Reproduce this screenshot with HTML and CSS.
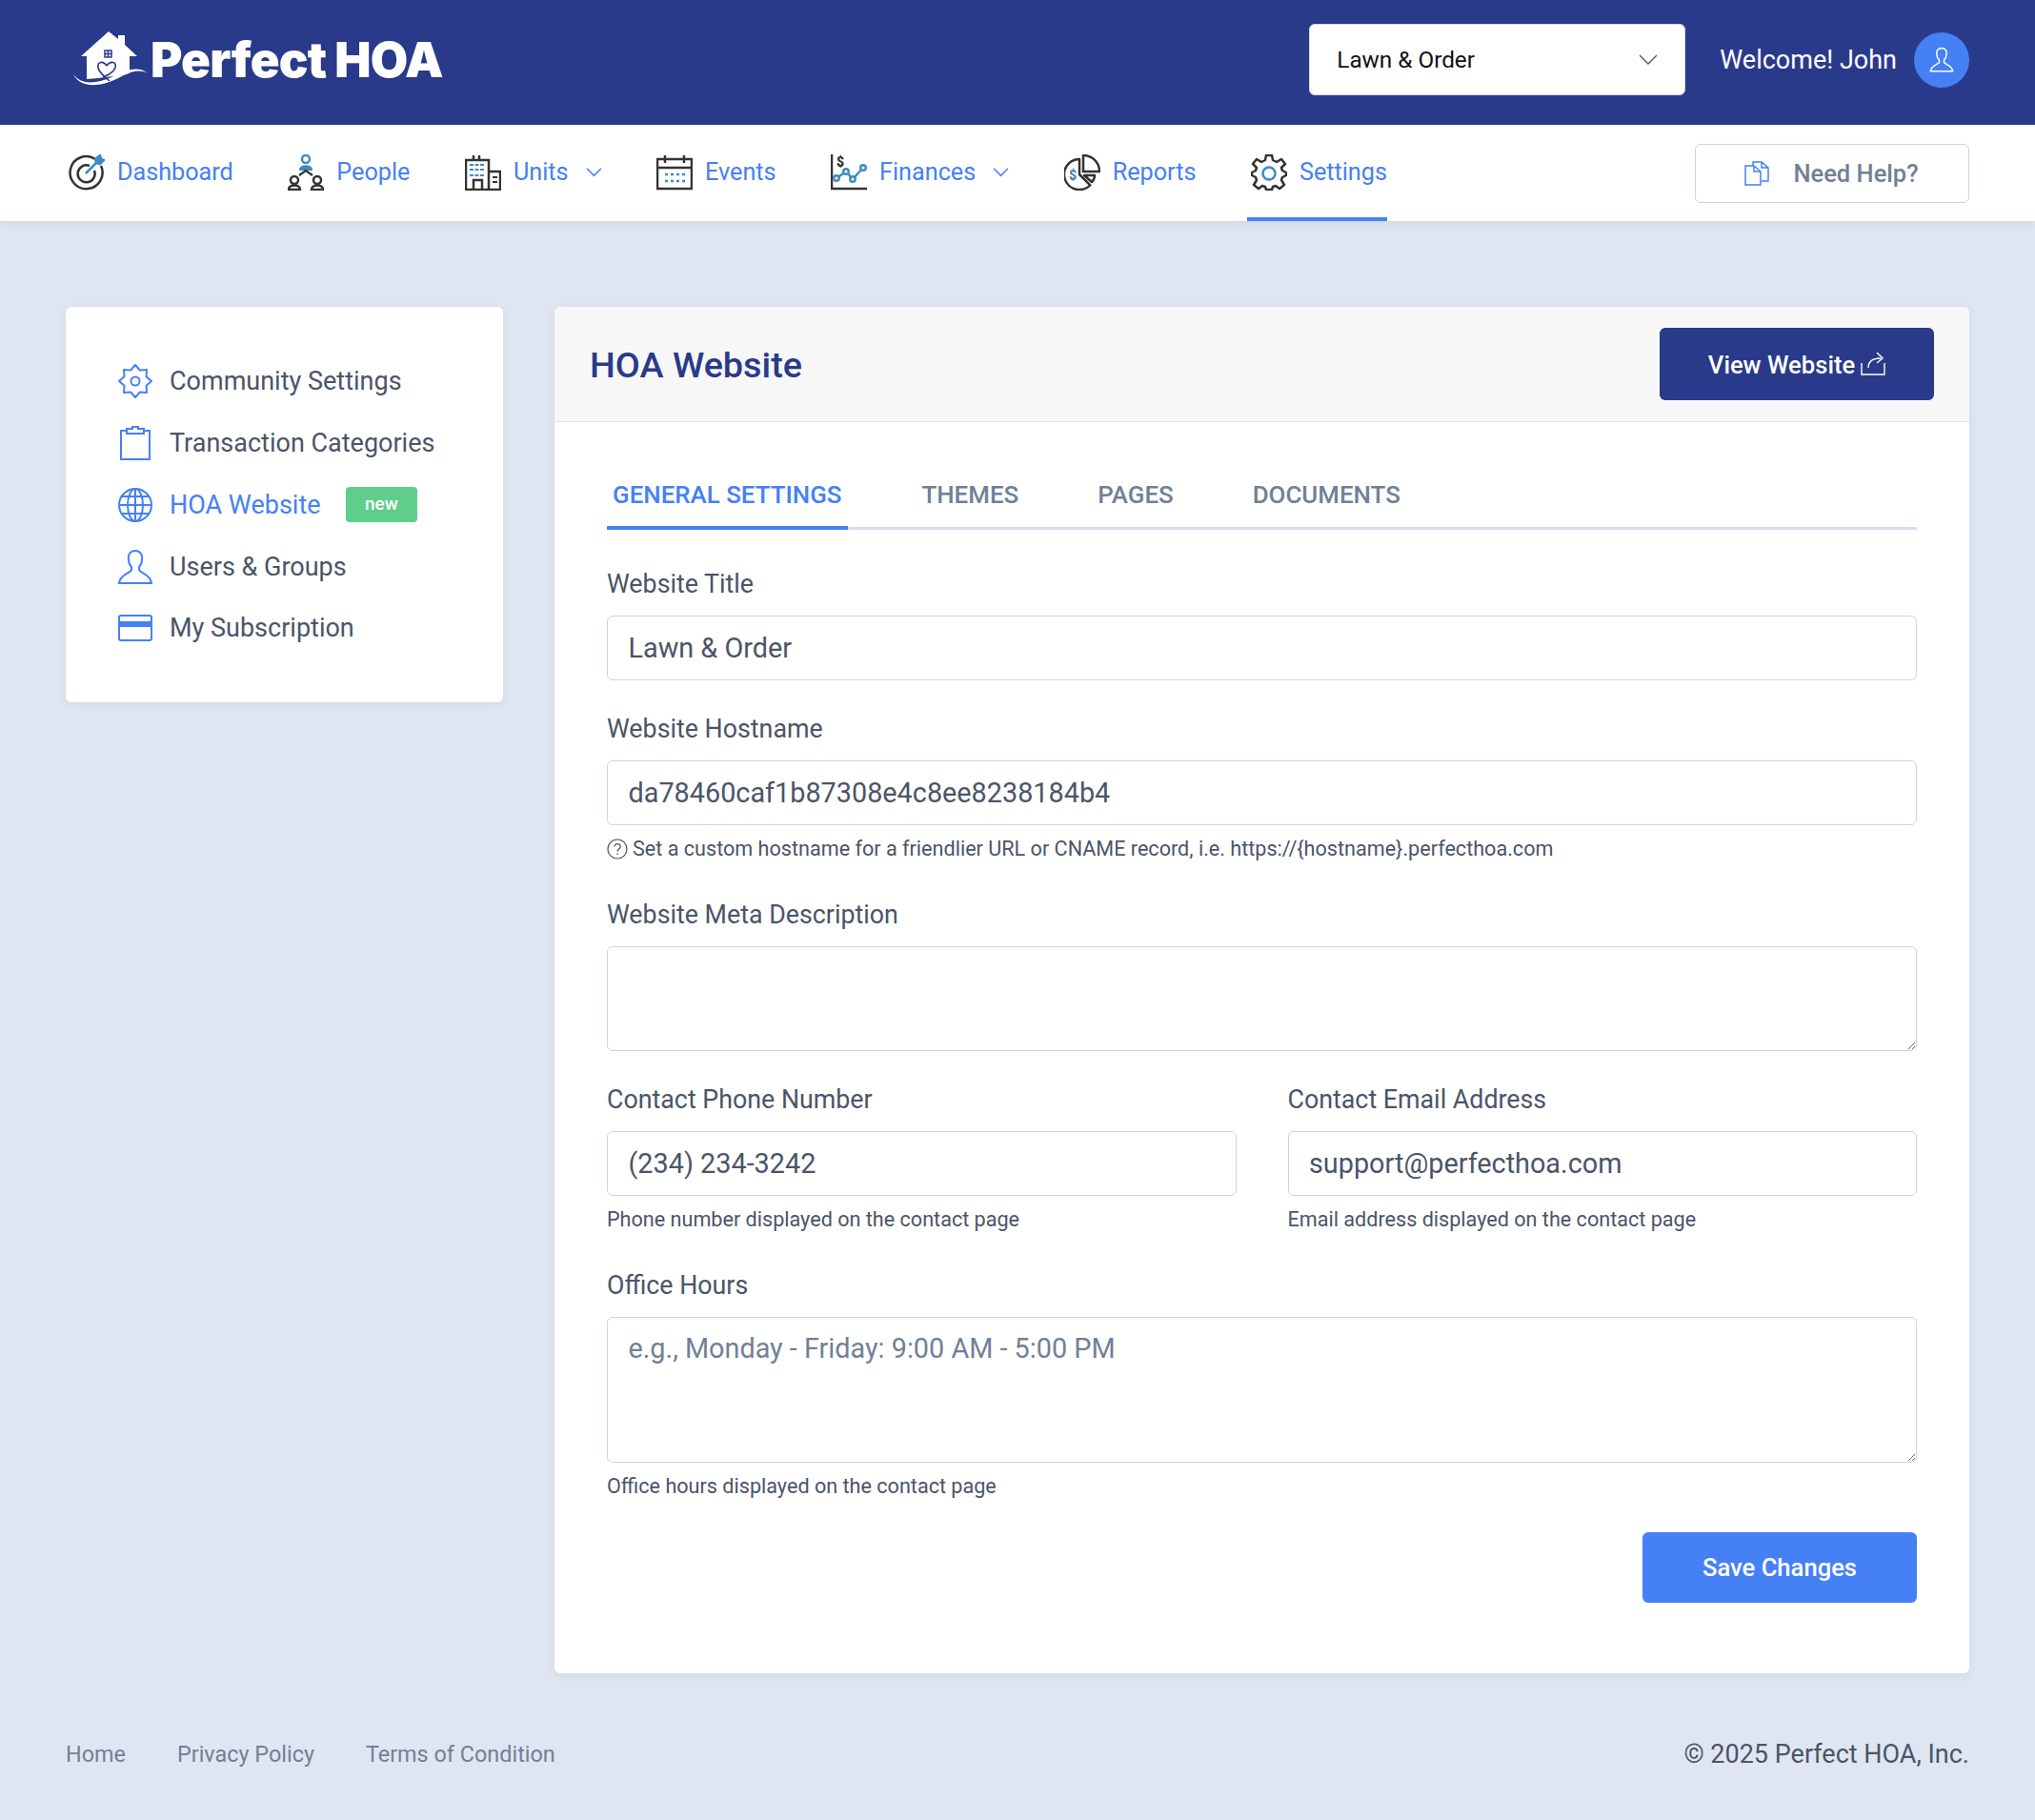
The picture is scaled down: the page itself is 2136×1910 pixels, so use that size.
FILE: index.html
```html
<!DOCTYPE html>
<html lang="en">
<head>
    <meta charset="UTF-8">
    <title>HOA Website - Perfect HOA</title>
    <link rel="stylesheet" href="styles.css">
</head>
<body>

<header class="topbar">
    <a class="logo" href="#">
        <svg class="logo-mark" viewBox="0 0 80 58" width="80" height="58">
            <path d="M38 0 L48 8 V4 H55 V14 L68 26 H60 V44 Q40 48 15 50 V26 H9 Z" fill="#fff"/>
            <path d="M1 45 C10 58 30 54 45 46 C58 40 70 36 79 44 C68 38 58 44 46 50 C30 58 8 60 1 45 Z" fill="#fff"/>
            <path d="M36 36 C32 30 26 32 27 38 C28 44 35 48 39 52 M36 36 C40 30 47 32 45 38 C43 44 36 46 32 48" fill="none" stroke="#2a3a8a" stroke-width="1.6"/>
            <path d="M34 20 h7 v7 h-7 z M37.5 20 v7 M34 23.500 h7" fill="none" stroke="#2a3a8a" stroke-width="1.5"/>
        </svg>
        <span class="logo-text">Perfect<span class="logo-hoa">HOA</span></span>
    </a>
    <div class="community-select">
        <span>Lawn &amp; Order</span>
        <svg viewBox="0 0 20 12" width="20" height="12"><path d="M1 1 L10 10 L19 1" fill="none" stroke="#4a5568" stroke-width="1.300"/></svg>
    </div>
    <span class="welcome">Welcome! John</span>
    <span class="avatar">
        <svg viewBox="0 0 36 36" width="30" height="30"><path d="M18 3 C13 3 11 7 12 11 C12 14 13 16 15 18 V21 C12 24 5 25 4 32 H32 C31 25 24 24 21 21 V18 C23 16 24 14 24 11 C25 7 23 3 18 3 Z" fill="none" stroke="#fff" stroke-width="1.800"/></svg>
    </span>
</header>

<nav class="mainnav">
    <a class="nav-item" href="#">
        <svg class="nav-icon" viewBox="0 0 38 38">
            <path d="M28 5 A17 17 0 1 0 34 12" fill="none" stroke="#333" stroke-width="2.500"/>
            <path d="M22 12 A9 9 0 1 0 27 17" fill="none" stroke="#333" stroke-width="2.500"/>
            <path d="M18 20 L31 7 M28 5 L29 9 L33 10 L37 6 L34 5 L33 1 Z" fill="#3f8ac4" stroke="#3f8ac4" stroke-width="2.500"/>
        </svg>
        <span>Dashboard</span>
    </a>
    <a class="nav-item" href="#">
        <svg class="nav-icon" viewBox="0 0 38 38">
            <circle cx="19" cy="5" r="4" fill="none" stroke="#3f8ac4" stroke-width="2.500"/>
            <path d="M13 16 C13 11 25 11 25 16 Z" fill="#3f8ac4" stroke="#3f8ac4" stroke-width="2"/>
            <circle cx="7" cy="27" r="4" fill="none" stroke="#333" stroke-width="2.500"/>
            <circle cx="31" cy="27" r="4" fill="none" stroke="#333" stroke-width="2.500"/>
            <path d="M1 37 C1 31 13 31 13 37 Z M25 37 C25 31 37 31 37 37 Z" fill="none" stroke="#333" stroke-width="2.500"/>
            <path d="M12 22 L19 17 L26 22" fill="none" stroke="#333" stroke-width="2.200"/>
        </svg>
        <span>People</span>
    </a>
    <a class="nav-item" href="#">
        <svg class="nav-icon" viewBox="0 0 38 38">
            <path d="M1 37 V6 H25 V37 Z M25 18 H37 V37 H25 M9 37 V27 H18 V37 M9 1 V6 M15 1 V6" fill="none" stroke="#333" stroke-width="2.500"/>
            <path d="M5 11 H21 M5 16 H21 M5 22 H21" fill="none" stroke="#3f8ac4" stroke-width="2.200" stroke-dasharray="4 1.500"/>
            <path d="M29 24 H34 M29 29 H34" stroke="#333" stroke-width="2.200"/>
        </svg>
        <span>Units</span>
        <svg class="nav-chevron" viewBox="0 0 20 12"><path d="M1 1 L10 10 L19 1" fill="none" stroke="#4680f5" stroke-width="1.800"/></svg>
    </a>
    <a class="nav-item" href="#">
        <svg class="nav-icon" viewBox="0 0 38 38">
            <path d="M1 5 H37 V36 H1 Z M1 14 H37 M9 1 V9 M29 1 V9" fill="none" stroke="#333" stroke-width="2.500"/>
            <path d="M9 21 H30 M9 28 H30" stroke="#3f8ac4" stroke-width="2.500" stroke-dasharray="3 3"/>
        </svg>
        <span>Events</span>
    </a>
    <a class="nav-item" href="#">
        <svg class="nav-icon" viewBox="0 0 38 38">
            <path d="M1 0 V36 H38" fill="none" stroke="#333" stroke-width="2.500"/>
            <path d="M6 25 L16 18 L23 26 L34 14" fill="none" stroke="#3f8ac4" stroke-width="2.400"/>
            <g fill="#fff" stroke="#3f8ac4" stroke-width="2.400">
                <circle cx="6" cy="25" r="2.800"/><circle cx="16" cy="18" r="2.800"/><circle cx="23" cy="26" r="2.800"/><circle cx="34" cy="14" r="2.800"/>
            </g>
            <text x="6" y="13" class="nav-dollar">$</text>
        </svg>
        <span>Finances</span>
        <svg class="nav-chevron" viewBox="0 0 20 12"><path d="M1 1 L10 10 L19 1" fill="none" stroke="#4680f5" stroke-width="1.800"/></svg>
    </a>
    <a class="nav-item" href="#">
        <svg class="nav-icon" viewBox="0 0 38 38">
            <path d="M16 5 A16 16 0 1 0 27.300 32.300 L16 21 Z" fill="none" stroke="#333" stroke-width="2.500" stroke-linejoin="round"/>
            <path d="M20 1 A17 17 0 0 1 37 18 H20 Z" fill="none" stroke="#333" stroke-width="2.500"/>
            <path d="M21 22 H32 Q32 26 29 29 Z" fill="none" stroke="#333" stroke-width="2.500" stroke-linejoin="round"/>
            <text x="5" y="27" class="nav-dollar nav-dollar-blue">$</text>
        </svg>
        <span>Reports</span>
    </a>
    <a class="nav-item nav-active" href="#">
        <svg class="nav-icon" viewBox="0 0 38 38">
            <path d="M16 1 H22 L23 6 L27 8 L32 5 L36 10 L32 14 L33 17 L37 19 V22 L33 24 L32 27 L35 32 L30 36 L26 33 L23 34 L22 37 H16 L15 34 L12 33 L8 36 L3 32 L6 27 L5 24 L1 22 V19 L5 17 L6 14 L2 10 L6 5 L11 8 L15 6 Z" fill="none" stroke="#333" stroke-width="2.500" stroke-linejoin="round"/>
            <circle cx="19" cy="20" r="6.500" fill="none" stroke="#3f8ac4" stroke-width="2.500"/>
        </svg>
        <span>Settings</span>
    </a>
    <a class="help-button" href="#">
        <svg viewBox="0 0 26 26" width="26" height="26"><path d="M9 5 V1 H18 L25 7 V21 H18 M1 5 H10 L17 11 V25 H1 Z M10 5 V11 H17 M18 1 V7 H25" fill="none" stroke="#4680f5" stroke-width="1.500"/></svg>
        <span>Need Help?</span>
    </a>
</nav>

<main class="content">
    <aside class="sidebar">
        <a class="side-item" href="#">
            <svg viewBox="0 0 36 36"><path d="M18 1 L22.800 6.500 L30 6 L29.500 13.200 L35 18 L29.500 22.800 L30 30 L22.800 29.500 L18 35 L13.200 29.500 L6 30 L6.500 22.800 L1 18 L6.500 13.200 L6 6 L13.200 6.500 Z" fill="none" stroke="#4680f5" stroke-width="2" stroke-linejoin="round"/><circle cx="18" cy="18" r="4.500" fill="none" stroke="#4680f5" stroke-width="2"/></svg>
            <span>Community Settings</span>
        </a>
        <a class="side-item" href="#">
            <svg viewBox="0 0 36 36"><path d="M9 5 H3 V35 H33 V5 H27 M9 8 V3 H15 V1 H21 V3 H27 V8 Z" fill="none" stroke="#4680f5" stroke-width="2"/></svg>
            <span>Transaction Categories</span>
        </a>
        <a class="side-item side-active" href="#">
            <svg viewBox="0 0 36 36"><circle cx="18" cy="18" r="17" fill="none" stroke="#4680f5" stroke-width="2"/><ellipse cx="18" cy="18" rx="8" ry="17" fill="none" stroke="#4680f5" stroke-width="2"/><path d="M18 1 V35 M1 18 H35 M4 9 H32 M4 27 H32" fill="none" stroke="#4680f5" stroke-width="2"/></svg>
            <span>HOA Website</span>
            <span class="badge">new</span>
        </a>
        <a class="side-item" href="#">
            <svg viewBox="0 0 36 36"><path d="M18 1 C13 1 10 5 11 10 C11 13 12 16 14 18 V21 C12 25 2 26 1 35 H35 C34 26 24 25 22 21 V18 C24 16 25 13 25 10 C26 5 23 1 18 1 Z" fill="none" stroke="#4680f5" stroke-width="2"/></svg>
            <span>Users &amp; Groups</span>
        </a>
        <a class="side-item" href="#">
            <svg viewBox="0 0 36 36"><rect x="1" y="5" width="34" height="26" rx="2" fill="none" stroke="#4680f5" stroke-width="2"/><rect x="1" y="11" width="34" height="6" fill="#4680f5"/></svg>
            <span>My Subscription</span>
        </a>
    </aside>

    <section class="card">
        <div class="card-head">
            <h1>HOA Website</h1>
            <a class="view-button" href="#">
                <span>View Website</span>
                <svg viewBox="0 0 26 26" width="26" height="26"><path d="M1 12 V24 H25 V12 M8 17 C8 10 13 7 21 7 M17 1 L23 7 L17 12" fill="none" stroke="#fff" stroke-width="1.400"/></svg>
            </a>
        </div>
        <div class="card-body">
            <div class="tabs">
                <a class="tab tab-active" href="#">GENERAL SETTINGS</a>
                <a class="tab" href="#">THEMES</a>
                <a class="tab" href="#">PAGES</a>
                <a class="tab" href="#">DOCUMENTS</a>
            </div>
            <form>
                <div class="form-group">
                    <label for="site-title">Website Title</label>
                    <input type="text" id="site-title" value="Lawn &amp; Order">
                </div>
                <div class="form-group">
                    <label for="site-host">Website Hostname</label>
                    <input type="text" id="site-host" value="da78460caf1b87308e4c8ee8238184b4">
                    <p class="help">
                        <svg viewBox="0 0 22 22" width="22" height="22"><circle cx="11" cy="11" r="10" fill="none" stroke="#4a5568" stroke-width="1.200"/><path d="M8 8.500 C8 4.500 14.500 4.800 14.300 8.500 C14.200 11 11 10.800 11 13.500 M11 15.500 V17" fill="none" stroke="#4a5568" stroke-width="1.300"/></svg>
                        Set a custom hostname for a friendlier URL or CNAME record, i.e. https://{hostname}.perfecthoa.com
                    </p>
                </div>
                <div class="form-group">
                    <label for="site-meta">Website Meta Description</label>
                    <textarea id="site-meta" class="meta-box"></textarea>
                </div>
                <div class="form-row">
                    <div class="form-group">
                        <label for="site-phone">Contact Phone Number</label>
                        <input type="text" id="site-phone" value="(234) 234-3242">
                        <p class="help">Phone number displayed on the contact page</p>
                    </div>
                    <div class="form-group">
                        <label for="site-email">Contact Email Address</label>
                        <input type="text" id="site-email" value="support@perfecthoa.com">
                        <p class="help">Email address displayed on the contact page</p>
                    </div>
                </div>
                <div class="form-group last-group">
                    <label for="site-hours">Office Hours</label>
                    <textarea id="site-hours" class="hours-box" placeholder="e.g., Monday - Friday: 9:00 AM - 5:00 PM"></textarea>
                    <p class="help">Office hours displayed on the contact page</p>
                </div>
                <div class="form-actions">
                    <button type="button" class="save-button">Save Changes</button>
                </div>
            </form>
        </div>
    </section>
</main>

<footer class="footer">
    <a href="#">Home</a>
    <a href="#">Privacy Policy</a>
    <a href="#">Terms of Condition</a>
    <span class="copyright">© 2025 Perfect HOA, Inc.</span>
</footer>

</body>
</html>
```

FILE: styles.css
```css
* {
    box-sizing: border-box;
}
body {
    font-family: 'Roboto', 'Liberation Sans', sans-serif;
    background-color: #e0e6f1;
    color: #4a5568;
    margin: 0;
}
a {
    text-decoration: none;
    color: inherit;
}

/* top bar */
.topbar {
    height: 131px;
    background-color: #2a3a8a;
    display: flex;
    align-items: center;
    padding: 0 69px 6px 76px;
}
.logo {
    display: flex;
    align-items: center;
    color: #fff;
    margin-right: auto;
}
.logo-mark {
    margin-top: -2px;
}
.logo-text {
    font-family: 'Inter', 'Roboto', sans-serif;
    font-size: 51px;
    font-weight: 900;
    letter-spacing: -0.8px;
    margin-left: 2px;
    line-height: 1;
}
.logo-hoa {
    margin-left: 9px;
}
.community-select {
    width: 395px;
    height: 75px;
    background: #fff;
    border: 1px solid #d5dbe6;
    border-radius: 6px;
    display: flex;
    align-items: center;
    justify-content: space-between;
    padding: 0 28px;
    font-size: 24.300px;
    color: #111;
}
.welcome {
    color: #fff;
    font-size: 27px;
    margin-left: 36px;
}
.avatar {
    width: 58px;
    height: 58px;
    border-radius: 50%;
    background-color: #4680f5;
    display: flex;
    align-items: center;
    justify-content: center;
    margin-left: 18px;
}

/* main nav */
.mainnav {
    height: 101px;
    background: #fff;
    display: flex;
    align-items: center;
    gap: 53.500px;
    padding: 0 69px 0 68px;
    box-shadow: 0 2px 10px rgba(0, 0, 0, 0.08);
    position: relative;
}
.nav-item {
    height: 100%;
    display: flex;
    align-items: center;
    padding: 2px 0 0 4px;
    font-size: 25.200px;
    color: #4680f5;
    border-bottom: 4px solid transparent;
}
.nav-icon {
    width: 38px;
    height: 38px;
    margin-right: 13px;
}
.nav-dollar {
    font-size: 14px;
    font-weight: 900;
    font-family: 'Roboto', sans-serif;
    fill: #333;
}
.nav-dollar-blue {
    fill: #3f8ac4;
}
.nav-chevron {
    width: 17px;
    height: 10px;
    margin-left: 18px;
}
.nav-active {
    border-bottom-color: #4680f5;
}
.help-button {
    width: 288px;
    height: 62px;
    margin-left: auto;
    border: 1px solid #cbd5e0;
    border-radius: 6px;
    display: flex;
    align-items: center;
    justify-content: center;
    gap: 25px;
    padding-right: 1px;
    color: #718096;
    font-size: 25.500px;
    font-weight: 500;
}

/* page */
.content {
    display: flex;
    align-items: flex-start;
    gap: 54px;
    padding: 90px 69px 0;
}
.sidebar {
    width: 459px;
    height: 415px;
    flex-shrink: 0;
    background: #fff;
    border-radius: 6px;
    box-shadow: 0 2px 10px rgba(45, 55, 72, 0.08);
    padding: 46px 0 0 55px;
}
.side-item {
    display: flex;
    align-items: center;
    height: 64.750px;
    font-size: 27px;
    color: #4a5568;
}
.side-item svg {
    width: 36px;
    height: 36px;
    margin-right: 18px;
    flex-shrink: 0;
}
.side-active {
    color: #4680f5;
}
.badge {
    background-color: #5fce8c;
    color: #fff;
    font-size: 19px;
    font-weight: 500;
    border-radius: 4px;
    padding: 0 20px;
    height: 37px;
    line-height: 36px;
    margin-left: 26.500px;
}
.card {
    flex: 1;
    background: #fff;
    border-radius: 6px;
    box-shadow: 0 2px 10px rgba(45, 55, 72, 0.08);
    overflow: hidden;
}
.card-head {
    height: 121px;
    background-color: #f7f7f7;
    border-bottom: 1px solid #dcdfe5;
    display: flex;
    align-items: center;
    justify-content: space-between;
    padding: 0 37px;
}
.card-head h1 {
    margin: 2px 0 0;
    font-size: 37.800px;
    font-weight: 500;
    color: #2a3a8a;
}
.view-button {
    width: 288px;
    height: 76px;
    background-color: #2a3a8a;
    border-radius: 6px;
    color: #fff;
    font-size: 25.600px;
    font-weight: 500;
    display: flex;
    align-items: center;
    justify-content: center;
    gap: 6px;
}
.view-button span {
    padding-top: 1px;
}
.card-body {
    padding: 36px 55px 74px;
}

/* tabs */
.tabs {
    display: flex;
    gap: 71px;
    height: 77px;
    border-bottom: 3px solid #d5def0;
    margin-bottom: 41px;
}
.tab {
    height: 77px;
    padding: 25px 6px 0;
    font-size: 25.900px;
    font-weight: 500;
    color: #718096;
}
.tab-active {
    color: #4680f5;
    padding-right: 7px;
    border-bottom: 4px solid #4680f5;
}

/* form */
.form-group {
    display: flow-root;
    margin-bottom: 35px;
}
.last-group {
    margin-bottom: 30px;
}
.form-row {
    display: flex;
    gap: 54px;
}
.form-row .form-group {
    flex: 1;
}
label {
    display: block;
    font-size: 26.800px;
    line-height: 32px;
    margin-bottom: 17px;
}
input[type="text"], textarea {
    display: block;
    width: 100%;
    border: 1px solid #cbd5e0;
    border-radius: 6px;
    padding: 0 21.500px;
    font-family: inherit;
    font-size: 28.800px;
    color: #4a5568;
    background: #fff;
    outline: none;
}
input[type="text"] {
    height: 68px;
}
textarea {
    padding-top: 14px;
    padding-bottom: 14px;
    line-height: 36px;
}
textarea::placeholder {
    color: #718096;
    opacity: 1;
}
.meta-box {
    height: 110px;
}
.hours-box {
    height: 153px;
}
.help {
    margin: 12px 0 5px;
    font-size: 21.600px;
    line-height: 26px;
    display: flex;
    align-items: center;
    gap: 5px;
}
.form-actions {
    display: flex;
    justify-content: flex-end;
}
.save-button {
    width: 288px;
    height: 74px;
    border: none;
    border-radius: 6px;
    background-color: #4680f5;
    color: #fff;
    font-family: inherit;
    font-size: 25.600px;
    font-weight: 500;
    cursor: pointer;
}

/* footer */
.footer {
    display: flex;
    align-items: flex-start;
    gap: 54px;
    padding: 69px 69px 0;
    height: 154px;
    color: #718096;
    font-size: 23.400px;
    line-height: 32px;
}
.copyright {
    margin-left: auto;
    font-size: 27px;
    color: #4a5568;
}
```
